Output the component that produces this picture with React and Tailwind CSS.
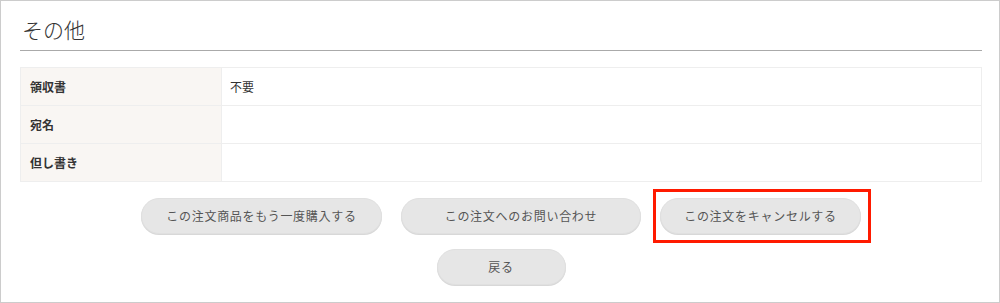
const rows = [
  { label: '領収書', value: '不要' },
  { label: '宛名', value: '' },
  { label: '但し書き', value: '' },
];

function PillButton({ children, className = '' }) {
  return (
    <button
      type="button"
      className={`h-[36px] rounded-full bg-[#e6e6e6] border border-[#e0e0e0] shadow-[0_1px_0_#d8d8d8] text-[12px] tracking-[0.06em] text-[#555] ${className}`}
    >
      {children}
    </button>
  );
}

export default function App() {
  return (
    <div
      className="w-[1000px] h-[303px] border border-[#cccccc] bg-white pl-[19px] pr-[17px] overflow-hidden"
      style={{ fontFamily: '"Noto Sans CJK JP", "Noto Sans", sans-serif' }}
    >
      <h2 className="pt-[14px] pb-[7px] pl-[2px] text-[21px] font-light leading-[28px] text-[#333] border-b border-[#aaaaaa]">
        その他
      </h2>

      <table className="mt-[16px] w-full border-collapse text-[12px] text-[#333]">
        <tbody>
          {rows.map((row) => (
            <tr key={row.label} className="h-[38px]">
              <th className="w-[201px] border border-[#eeeeee] bg-[#f9f6f3] pl-[9px] text-left font-bold">
                {row.label}
              </th>
              <td className="border border-[#eeeeee] pl-[8px]">{row.value}</td>
            </tr>
          ))}
        </tbody>
      </table>

      <div className="mt-[16px] flex justify-center gap-[19px]">
        <PillButton className="w-[241px]">この注文商品をもう一度購入する</PillButton>
        <PillButton className="w-[240px]">この注文へのお問い合わせ</PillButton>
        <div className="relative">
          <PillButton className="w-[201px]">この注文をキャンセルする</PillButton>
          <span className="pointer-events-none absolute -left-[7px] -right-[10px] -top-[9px] -bottom-[9px] border-[3px] border-[#ff1a00]" />
        </div>
      </div>

      <div className="mt-[15px] flex justify-center">
        <PillButton className="w-[129px] h-[35px]">戻る</PillButton>
      </div>
    </div>
  );
}
